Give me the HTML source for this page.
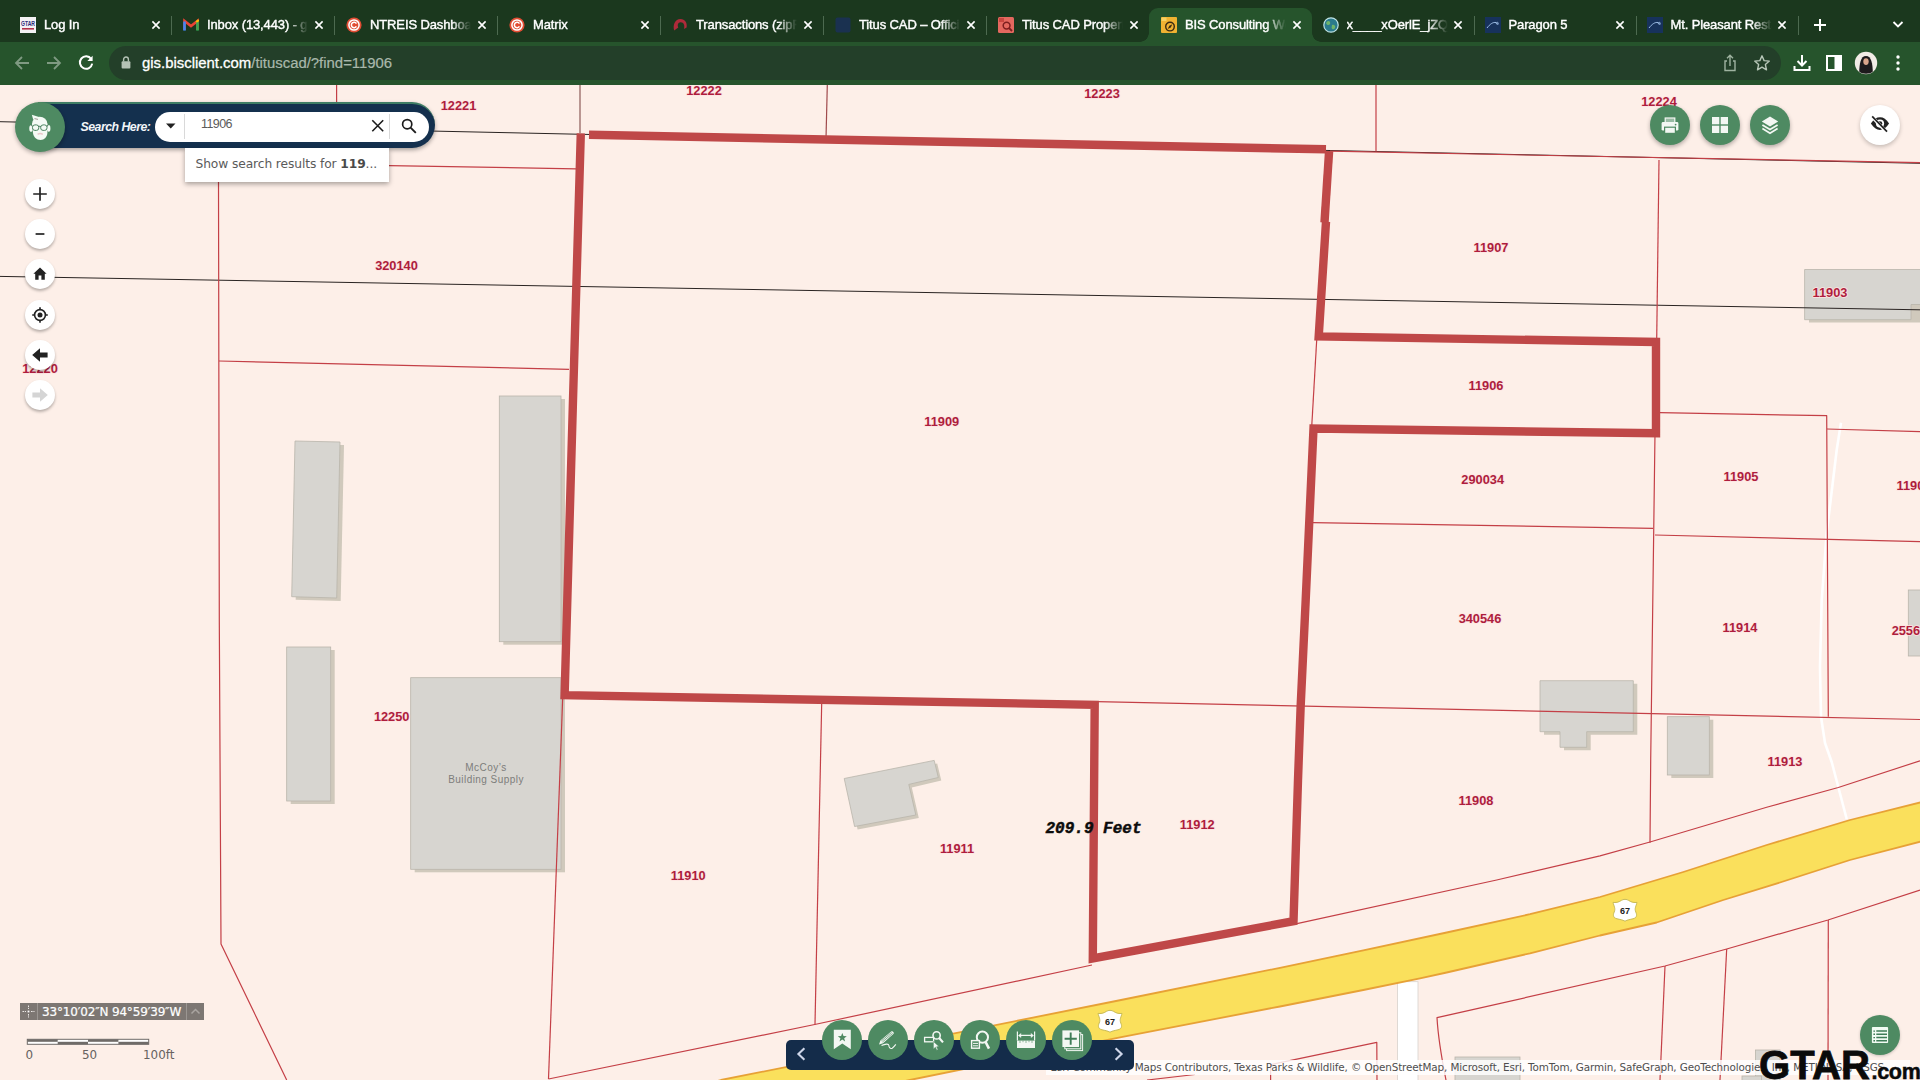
<!DOCTYPE html>
<html lang="en">
<head>
<meta charset="utf-8">
<title>BIS Consulting Web Map</title>
<style>
*{box-sizing:border-box;margin:0;padding:0}
html,body{width:1920px;height:1080px;overflow:hidden;background:#fdefe8;font-family:"Liberation Sans",sans-serif}
#map{position:absolute;left:0;top:0;width:1920px;height:1080px}
#map text.pl{font-family:"Liberation Sans",sans-serif;font-weight:bold;font-size:12.8px;fill:#ae1d3d;text-anchor:middle;paint-order:stroke;stroke:#fde4e1;stroke-width:1.6px;stroke-linejoin:round}
/* ---------- browser chrome ---------- */
#tabbar{position:absolute;left:0;top:0;width:1920px;height:43px;background:#1b381e}
#toolbar{position:absolute;left:0;top:42px;width:1920px;height:43px;background:#26542c}
.tab{position:absolute;top:8px;height:34px;width:163px;color:#fff;font-size:13px;line-height:34px;white-space:nowrap}
.tab .fav{position:absolute;left:12px;top:9px;width:16px;height:16px}
.tab .tt{position:absolute;left:36px;top:0;width:102px;-webkit-text-stroke:.4px #fff;letter-spacing:-.12px;overflow:hidden;-webkit-mask-image:linear-gradient(90deg,#000 80%,transparent 99%);mask-image:linear-gradient(90deg,#000 80%,transparent 99%)}
.tab .cx{position:absolute;left:141.5px;top:11px;width:12px;height:12px}
.tab.sep:after{content:"";position:absolute;right:-1px;top:8px;width:1px;height:19px;background:#4d6a50}
.tab.act{background:#26542c;border-radius:9px 9px 0 0}
.tab.act:before,.tab.act:after{content:"";position:absolute;bottom:0;width:9px;height:9px;background:radial-gradient(circle at 0 0,transparent 8.5px,#26542c 9px)}
.tab.act:before{left:-9px}
.tab.act:after{right:-9px;background:radial-gradient(circle at 100% 0,transparent 8.5px,#26542c 9px)}
#pill{position:absolute;left:109px;top:4px;width:1672px;height:34px;border-radius:17px;background:#233f29}
#url{position:absolute;left:142px;top:11px;font-size:14.9px;line-height:20px;color:#fff;white-space:nowrap;-webkit-text-stroke:.3px #fff}
#url span{color:#a9b8ab;-webkit-text-stroke:.2px #a9b8ab}
.tbi{position:absolute}
/* ---------- map widgets ---------- */
.rbtn{position:absolute;width:30px;height:30px;border-radius:50%;background:#fff;box-shadow:0 2px 3px rgba(0,0,0,.28)}
.rbtn svg{position:absolute;left:0;top:0;width:30px;height:30px}
.gbtn{position:absolute;width:40px;height:40px;border-radius:50%;background:#4e8a62;box-shadow:0 2px 4px rgba(0,0,0,.3)}
.gbtn svg{position:absolute;left:0;top:0;width:40px;height:40px}
.verd{font-family:"DejaVu Sans","Liberation Sans",sans-serif}
</style>
</head>
<body>
<svg id="map" width="1920" height="1080" viewBox="0 0 1920 1080">
<rect x="0" y="0" width="1920" height="1080" fill="#fdefe8"/>
<!-- buildings: shadows then bodies -->
<g fill="#d0c9bc" stroke="none">
 <polygon points="299,444 344,445 340.7,601 295.7,599.7"/>
 <rect x="290.7" y="650" width="44" height="154"/>
 <rect x="503.3" y="399" width="61.7" height="245.7"/>
 <rect x="414.7" y="680.7" width="150.3" height="191.6"/>
 <polygon points="1544,683.7 1637.3,683.7 1637.3,734.7 1590.7,734.7 1590.7,750.3 1564,750.3 1564,734.7 1544,734.7"/>
 <rect x="1671.3" y="719.7" width="42" height="58.3"/>
 <polygon points="1809,272 1924,272 1924,322.5 1809,322.5"/>
 <polygon points="847.2,781.5 937.2,763.4 941.3,780.5 911.8,787.4 918.8,818 857.6,829.5"/>
</g>
<g fill="#d7d5d0" stroke="#b9b5ab" stroke-width="0.8">
 <polygon points="295,441 340,442 336.7,598 291.7,596.7"/>
 <rect x="286.7" y="647" width="44" height="154"/>
 <rect x="499.3" y="396" width="61.7" height="245.7"/>
 <rect x="410.7" y="677.7" width="150.3" height="191.6"/>
 <polygon points="1540,680.7 1633.3,680.7 1633.3,731.7 1586.7,731.7 1586.7,747.3 1560,747.3 1560,731.7 1540,731.7"/>
 <rect x="1667.3" y="716.7" width="42" height="58.3"/>
 <polygon points="1804.6,269.5 1925,269.5 1925,304.5 1911,304.5 1911,319.7 1804.6,319.7"/>
 <rect x="1908.3" y="590" width="20" height="66"/>
 <rect x="1455" y="1057" width="65" height="30"/>
 <rect x="1755.5" y="1050" width="24.5" height="40"/>
 <rect x="1742" y="1076" width="19.5" height="10"/>
 <polygon points="844.2,778.5 934.2,760.4 938.3,777.5 908.8,784.4 915.8,815 854.6,826.5"/>
</g>
<text x="486" y="771" font-family="Liberation Sans, sans-serif" font-size="10" fill="#7d7d7b" text-anchor="middle" letter-spacing="0.45">McCoy’s</text>
<text x="486" y="783" font-family="Liberation Sans, sans-serif" font-size="10" fill="#7d7d7b" text-anchor="middle" letter-spacing="0.45">Building Supply</text>
<!-- white local road -->
<rect x="1397.5" y="981.7" width="20.5" height="110" fill="#ffffff" stroke="#d8d2cc" stroke-width="0.8"/>
<!-- white path -->
<path d="M1841,422.7 L1836.7,450 L1826.7,533 L1821.7,600 L1820,666.7 L1821,716.7 L1825,743 L1831.7,762 L1846.7,819" fill="none" stroke="#ffffff" stroke-width="2.6" stroke-linejoin="round"/>
<!-- highway 67 -->
<path d="M721,1080 L1121,1000 L1280,967.8 L1363.3,950.3 L1446.7,932.5 L1530,914.2 L1600,897 L1683.3,872 L1766.7,845 L1850,820 L1925,801.3 L1925,840.4 L1850,860 L1766.7,886.7 L1723.3,900 L1656.7,922.5 L1600,935.5 L1530,953.3 L1446.7,972.5 L1420,978.3 L1363.3,990 L1280,1006.5 L1120,1037.3 L910,1080 L880,1086 L700,1086 Z" fill="#fae05c" stroke="#e7a136" stroke-width="1.8" stroke-linejoin="round"/>
<!-- black survey lines -->
<g stroke="#2a2422" stroke-width="1" fill="none">
 <line x1="0" y1="121.7" x2="1920" y2="163.3"/>
 <line x1="0" y1="276.4" x2="1920" y2="309.8"/>
</g>
<!-- thin parcel lines -->
<g stroke="#c43f46" stroke-width="1.2" fill="none" stroke-linejoin="round">
 <line x1="336.6" y1="85" x2="336.6" y2="129"/>
 <line x1="580" y1="85" x2="580" y2="133" stroke="#8d5a58"/>
 <line x1="827.3" y1="85" x2="826" y2="139" stroke="#a04a4c"/>
 <line x1="1376" y1="85" x2="1376" y2="151.5"/>
 <line x1="218.5" y1="162.7" x2="576" y2="168.8"/>
 <polyline points="218.4,126 218.5,180 219.3,620 221,944 286.7,1080"/>
 <line x1="219" y1="361" x2="569" y2="369.3"/>
 <line x1="1330" y1="151.2" x2="1920" y2="162.7"/>
 <line x1="1659" y1="160" x2="1656.7" y2="340"/>
 <line x1="1316.7" y1="340" x2="1311.7" y2="427"/>
 <polyline points="1660,412.7 1826.7,415.7 1828.3,716.7"/>
 <line x1="1827" y1="429" x2="1920" y2="431.7"/>
 <line x1="1313" y1="522.7" x2="1653" y2="528.3"/>
 <polyline points="1655,433 1650.7,760 1650,842.7"/>
 <line x1="1655" y1="535" x2="1920" y2="541.7"/>
 <line x1="1097" y1="701.6" x2="1920" y2="719.5"/>
 <line x1="821.7" y1="703" x2="815" y2="1024.5"/>
 <line x1="562.7" y1="698" x2="548.5" y2="1079"/>
 <polyline points="548.5,1079 814.7,1024.5 1092,965"/>
 <path d="M1297,923.6 L1496.7,880 L1600,855.8 L1650,842 L1766.7,807.2 L1838.3,787.5 L1920,760.8"/>
 <path d="M1446,1080 C1441,1055 1438,1035 1437,1017.7 L1665,966 L1726.7,949 L1828,920 L1920,890"/>
 <line x1="1665" y1="966" x2="1660" y2="1080"/>
 <line x1="1726.7" y1="949" x2="1720" y2="1080"/>
 <line x1="1828.3" y1="920" x2="1828" y2="1080"/>
 <polyline points="1377,1080 1376.8,1042.4 1270.6,1064.6 1270.6,1080"/>
 <line x1="1147" y1="1080" x2="1195" y2="1074.5"/>
</g>
<!-- thick selected boundary -->
<g stroke="#bf4848" stroke-width="8.4" fill="none" stroke-linejoin="miter" stroke-linecap="butt">
 <line x1="589" y1="134.8" x2="1326" y2="149.3"/>
 <polyline points="580.8,133.3 573,400 564.6,695.2 1094.7,704.8 1092.8,958.5 1293.5,921.2 1298,780 1300.6,707.5 1305.7,600 1313.5,428.6 1656,433.3 1656,342 1318.7,336.4 1326,221.7"/>
 <polyline points="1324.5,222.5 1329.1,151"/>
</g>
<!-- highway shields -->
<g id="sh">
 <g transform="translate(1110,1021)"><path d="M-12,-7.6 C-9.5,-7.2 -6.5,-7.6 -3.6,-9.6 C-1.8,-11 1.8,-11 3.6,-9.6 C6.5,-7.6 9.5,-7.2 12,-7.6 C11.2,-4 9.2,-1.5 10.8,2 C12.4,5.5 11.5,8 8,8.8 C5,9.5 2.5,9.8 0,11.2 C-2.5,9.8 -5,9.5 -8,8.8 C-11.5,8 -12.4,5.5 -10.8,2 C-9.2,-1.5 -11.2,-4 -12,-7.6 Z" fill="#ffffff" stroke="#c9bb55" stroke-width="1"/><text x="0" y="3.6" font-family="Liberation Sans, sans-serif" font-size="9" font-weight="bold" fill="#222" text-anchor="middle">67</text></g>
 <g transform="translate(1625,910)"><path d="M-12,-7.6 C-9.5,-7.2 -6.5,-7.6 -3.6,-9.6 C-1.8,-11 1.8,-11 3.6,-9.6 C6.5,-7.6 9.5,-7.2 12,-7.6 C11.2,-4 9.2,-1.5 10.8,2 C12.4,5.5 11.5,8 8,8.8 C5,9.5 2.5,9.8 0,11.2 C-2.5,9.8 -5,9.5 -8,8.8 C-11.5,8 -12.4,5.5 -10.8,2 C-9.2,-1.5 -11.2,-4 -12,-7.6 Z" fill="#ffffff" stroke="#c9bb55" stroke-width="1"/><text x="0" y="3.6" font-family="Liberation Sans, sans-serif" font-size="9" font-weight="bold" fill="#222" text-anchor="middle">67</text></g>
</g>
<!-- parcel labels -->
<g>
 <text class="pl" x="458.5" y="109.5">12221</text>
 <text class="pl" x="704" y="94.5">12222</text>
 <text class="pl" x="1102" y="97.5">12223</text>
 <text class="pl" x="1659" y="106">12224</text>
 <text class="pl" x="396.5" y="269.5">320140</text>
 <text class="pl" x="40" y="373">12220</text>
 <text class="pl" x="1491" y="251.5">11907</text>
 <text class="pl" x="1830" y="296.5">11903</text>
 <text class="pl" x="1486" y="389.5">11906</text>
 <text class="pl" x="941.7" y="426">11909</text>
 <text class="pl" x="1482.7" y="483.8">290034</text>
 <text class="pl" x="1741" y="480.5">11905</text>
 <text class="pl" x="1914" y="489.5">11904</text>
 <text class="pl" x="1480" y="622.8">340546</text>
 <text class="pl" x="1740" y="631.8">11914</text>
 <text class="pl" x="1913" y="634.5">255601</text>
 <text class="pl" x="391.7" y="720.5">12250</text>
 <text class="pl" x="1785" y="765.5">11913</text>
 <text class="pl" x="1476" y="804.5">11908</text>
 <text class="pl" x="1197.2" y="828.5">11912</text>
 <text class="pl" x="957" y="852.5">11911</text>
 <text class="pl" x="688.3" y="879.8">11910</text>
 <text x="1093.5" y="832.7" font-family="Liberation Mono, monospace" font-weight="bold" font-style="italic" font-size="16" fill="#0c0c0c" stroke="#0c0c0c" stroke-width=".45" text-anchor="middle">209.9 Feet</text>
</g>
</svg>
<div id="tabbar">
 <div class="tab sep" style="left:8px"><svg class="fav" viewBox="0 0 16 16"><rect width="16" height="16" fill="#f4f2f4"/><text x="8" y="8.5" font-family="Liberation Sans, sans-serif" font-size="6.5" font-weight="bold" fill="#2b2d7c" text-anchor="middle" textLength="14" lengthAdjust="spacingAndGlyphs">GTAR</text><rect x="2" y="11" width="12" height="1.6" fill="#b3324a"/></svg><span class="tt">Log In</span><svg class="cx" viewBox="0 0 12 12"><path d="M2.4,2.4 L9.6,9.600 M9.600,2.400 L2.400,9.600" stroke="#fff" stroke-width="1.600" fill="none"/></svg></div>
 <div class="tab sep" style="left:171px"><svg class="fav" viewBox="0 0 16 16"><path d="M1.5,13 V4 L8,9 L14.5,4 V13" fill="none" stroke="#ea4335" stroke-width="2.6" stroke-linejoin="miter"/><path d="M1.5,13.6 V4.5" stroke="#4285f4" stroke-width="2.6"/><path d="M14.5,13.6 V4.5" stroke="#34a853" stroke-width="2.6"/><path d="M13.2,5 L15.8,3" stroke="#fbbc04" stroke-width="2.2"/></svg><span class="tt">Inbox (13,443) - gmail</span><svg class="cx" viewBox="0 0 12 12"><path d="M2.4,2.4 L9.6,9.600 M9.600,2.400 L2.400,9.600" stroke="#fff" stroke-width="1.600" fill="none"/></svg></div>
 <div class="tab sep" style="left:334px"><svg class="fav" viewBox="0 0 16 16"><circle cx="8" cy="8" r="7.6" fill="#e14c33"/><circle cx="8" cy="8" r="5.1" fill="none" stroke="#fff" stroke-width="1.5"/><path d="M10.4,6.6 A2.7,2.7 0 1 0 10.4,9.4" fill="none" stroke="#fff" stroke-width="1.5"/></svg><span class="tt">NTREIS Dashboard</span><svg class="cx" viewBox="0 0 12 12"><path d="M2.4,2.4 L9.6,9.600 M9.600,2.400 L2.400,9.600" stroke="#fff" stroke-width="1.600" fill="none"/></svg></div>
 <div class="tab sep" style="left:497px"><svg class="fav" viewBox="0 0 16 16"><circle cx="8" cy="8" r="7.6" fill="#e14c33"/><circle cx="8" cy="8" r="5.1" fill="none" stroke="#fff" stroke-width="1.5"/><path d="M10.4,6.6 A2.7,2.7 0 1 0 10.4,9.4" fill="none" stroke="#fff" stroke-width="1.5"/></svg><span class="tt">Matrix</span><svg class="cx" viewBox="0 0 12 12"><path d="M2.4,2.4 L9.6,9.600 M9.600,2.400 L2.400,9.600" stroke="#fff" stroke-width="1.600" fill="none"/></svg></div>
 <div class="tab sep" style="left:660px"><svg class="fav" viewBox="0 0 16 16"><path d="M2.2,13.5 C0.5,8 3,2.2 8.5,2 C13,2 15.5,6 14.6,10.5 L12,12 C13,8 11.5,5.2 8.6,5.3 C6,5.6 5.2,8 6.3,10.6 Z" fill="#ae2a3a"/></svg><span class="tt">Transactions (zipForm)</span><svg class="cx" viewBox="0 0 12 12"><path d="M2.4,2.4 L9.6,9.600 M9.600,2.400 L2.400,9.600" stroke="#fff" stroke-width="1.600" fill="none"/></svg></div>
 <div class="tab sep" style="left:823px"><svg class="fav" viewBox="0 0 16 16"><rect x="0.5" y="0.5" width="15" height="15" rx="2" fill="#1a3150"/></svg><span class="tt">Titus CAD – Official</span><svg class="cx" viewBox="0 0 12 12"><path d="M2.4,2.4 L9.6,9.600 M9.600,2.400 L2.400,9.600" stroke="#fff" stroke-width="1.600" fill="none"/></svg></div>
 <div class="tab" style="left:986px"><svg class="fav" viewBox="0 0 16 16"><rect width="16" height="16" rx="1.5" fill="#e4685f"/><rect x="1" y="1" width="5" height="4" fill="#c8463f"/><circle cx="8.6" cy="8.6" r="3.4" fill="none" stroke="#7d1f1f" stroke-width="1.5"/><path d="M11,11 L14,14" stroke="#7d1f1f" stroke-width="1.8"/></svg><span class="tt">Titus CAD Property</span><svg class="cx" viewBox="0 0 12 12"><path d="M2.4,2.4 L9.6,9.600 M9.600,2.400 L2.400,9.600" stroke="#fff" stroke-width="1.600" fill="none"/></svg></div>
 <div class="tab act" style="left:1149px"><svg class="fav" viewBox="0 0 16 16"><rect width="16" height="16" rx="1" fill="#f0b232"/><rect x="0.5" y="0.5" width="5" height="3.5" fill="#f6cf62"/><circle cx="9" cy="9.6" r="4.3" fill="none" stroke="#3a2a12" stroke-width="1.4"/><path d="M11.3,7.3 L8.3,8.8 L6.7,11.9 L9.8,10.4 Z" fill="#3a2a12"/></svg><span class="tt">BIS Consulting Web</span><svg class="cx" viewBox="0 0 12 12"><path d="M2.4,2.4 L9.6,9.600 M9.600,2.400 L2.400,9.600" stroke="#fff" stroke-width="1.600" fill="none"/></svg></div>
 <div class="tab sep" style="left:1310.5px"><svg class="fav" viewBox="0 0 16 16"><circle cx="8" cy="8" r="7.2" fill="#2b7a8c" stroke="#bfe3e6" stroke-width="1.2"/><path d="M4,4.5 C6,3 8,5 7,7 C6,9 3.5,8 3,6 Z M9,8 C11,7 13,9 12,11 C11,13 8.5,12.5 8.6,10.5 Z" fill="#6fb56a"/></svg><span class="tt">x____xOerlE_jZQj</span><svg class="cx" viewBox="0 0 12 12"><path d="M2.4,2.4 L9.6,9.600 M9.600,2.400 L2.400,9.600" stroke="#fff" stroke-width="1.600" fill="none"/></svg></div>
 <div class="tab sep" style="left:1472.5px"><svg class="fav" viewBox="0 0 16 16"><rect width="16" height="16" fill="#17325c"/><path d="M2,11 C5,7 8,5 11,5.5 L13,7.5" fill="none" stroke="#9fc0e8" stroke-width="1"/><circle cx="12.3" cy="6.3" r="1" fill="none" stroke="#9fc0e8" stroke-width=".8"/></svg><span class="tt">Paragon 5</span><svg class="cx" viewBox="0 0 12 12"><path d="M2.4,2.4 L9.6,9.600 M9.600,2.400 L2.400,9.600" stroke="#fff" stroke-width="1.600" fill="none"/></svg></div>
 <div class="tab sep" style="left:1634.5px"><svg class="fav" viewBox="0 0 16 16"><rect width="16" height="16" fill="#17325c"/><path d="M2,11 C5,7 8,5 11,5.5 L13,7.5" fill="none" stroke="#9fc0e8" stroke-width="1"/><circle cx="12.3" cy="6.3" r="1" fill="none" stroke="#9fc0e8" stroke-width=".8"/></svg><span class="tt">Mt. Pleasant Restaurants</span><svg class="cx" viewBox="0 0 12 12"><path d="M2.4,2.4 L9.6,9.600 M9.600,2.400 L2.400,9.600" stroke="#fff" stroke-width="1.600" fill="none"/></svg></div>
 <svg class="tbi" style="left:1813px;top:18px" width="14" height="14" viewBox="0 0 14 14"><path d="M7,1 V13 M1,7 H13" stroke="#fff" stroke-width="2" fill="none"/></svg>
 <svg class="tbi" style="left:1892px;top:20px" width="12" height="9" viewBox="0 0 12 9"><path d="M1.5,2 L6,6.5 L10.5,2" stroke="#fff" stroke-width="1.8" fill="none"/></svg>
</div>
<div id="toolbar">
 <div id="pill"></div>
 <svg class="tbi" style="left:14px;top:13px" width="16" height="16" viewBox="0 0 16 16"><path d="M15,8 H2 M8,2 L2,8 L8,14" stroke="#7f9a82" stroke-width="1.8" fill="none"/></svg>
 <svg class="tbi" style="left:46px;top:13px" width="16" height="16" viewBox="0 0 16 16"><path d="M1,8 H14 M8,2 L14,8 L8,14" stroke="#7f9a82" stroke-width="1.8" fill="none"/></svg>
 <svg class="tbi" style="left:77px;top:12px" width="18" height="18" viewBox="0 0 18 18"><path d="M14.2,5 A6.2,6.2 0 1 0 15.2,9.6" stroke="#fff" stroke-width="2" fill="none"/><path d="M15.6,1.8 V7 H10.4 Z" fill="#fff"/></svg>
 <svg class="tbi" style="left:121px;top:14px" width="10" height="13" viewBox="0 0 10 13"><rect x="0.6" y="5.2" width="8.8" height="7.2" rx="1" fill="#b4c2b5"/><path d="M2.6,5.4 V3.4 A2.4,2.4 0 0 1 7.4,3.4 V5.4" stroke="#b4c2b5" stroke-width="1.4" fill="none"/></svg>
 <div id="url">gis.bisclient.com<span>/tituscad/?find=11906</span></div>
 <svg class="tbi" style="left:1722px;top:12px" width="16" height="18" viewBox="0 0 16 18"><path d="M5,7 H3 V16.5 H13 V7 H11 M8,12 V1.5 M5,4.3 L8,1.3 L11,4.3" stroke="#9fb3a1" stroke-width="1.4" fill="none"/></svg>
 <svg class="tbi" style="left:1753px;top:12px" width="18" height="18" viewBox="0 0 18 18"><path d="M9,1.8 L11.1,6.6 L16.3,7.1 L12.4,10.6 L13.5,15.8 L9,13.1 L4.5,15.8 L5.6,10.6 L1.7,7.1 L6.9,6.6 Z" stroke="#b7c6b8" stroke-width="1.4" fill="none" stroke-linejoin="round"/></svg>
 <svg class="tbi" style="left:1793px;top:12px" width="18" height="18" viewBox="0 0 18 18"><path d="M9,1 V11 M4.5,7 L9,11.5 L13.5,7 M1.5,12 V16 H16.5 V12" stroke="#fff" stroke-width="2" fill="none"/></svg>
 <svg class="tbi" style="left:1826px;top:13px" width="16" height="16" viewBox="0 0 16 16"><rect x="1" y="1" width="14" height="14" fill="none" stroke="#fff" stroke-width="2"/><rect x="8.5" y="1" width="6.5" height="14" fill="#fff"/></svg>
 <svg class="tbi" style="left:1854px;top:9px" width="24" height="24" viewBox="0 0 24 24"><circle cx="12" cy="12" r="11.2" fill="#f1ece6"/><path d="M5.2,20.5 C5.5,13 6.5,5 12,5 C17.5,5 18.5,13 18.8,20.5 C16,23.5 8,23.5 5.2,20.5 Z" fill="#1d1a1c"/><ellipse cx="12" cy="10.6" rx="2.7" ry="3.4" fill="#d9a48a"/></svg>
 <svg class="tbi" style="left:1895px;top:12px" width="6" height="18" viewBox="0 0 6 18"><circle cx="3" cy="3" r="1.7" fill="#fff"/><circle cx="3" cy="9" r="1.7" fill="#fff"/><circle cx="3" cy="15" r="1.7" fill="#fff"/></svg>
</div>
<!-- search widget -->
<div id="sbar" style="position:absolute;left:38px;top:102px;width:396.5px;height:46px;background:#14304e;border-radius:0 23px 23px 0;border-top:2px solid #3f7d64;box-shadow:0 2px 4px rgba(0,0,0,.35)"></div>
<div style="position:absolute;left:80.5px;top:117px;font-family:'Liberation Sans',sans-serif;font-style:italic;font-weight:bold;font-size:12.3px;line-height:20px;color:#f2f5f8;letter-spacing:-0.5px;white-space:nowrap">Search Here:</div>
<div style="position:absolute;left:155px;top:112px;width:274px;height:30px;border-radius:15px;background:#fff"></div>
<svg style="position:absolute;left:165px;top:122px" width="12" height="8" viewBox="0 0 12 8"><path d="M1,1.5 H10.5 L5.75,6.5 Z" fill="#222"/></svg>
<div style="position:absolute;left:184px;top:114px;width:1px;height:25px;background:#d9d9d9"></div>
<div style="position:absolute;left:389px;top:114px;width:1px;height:25px;background:#d9d9d9"></div>
<div style="position:absolute;left:201px;top:115px;font-size:12.5px;line-height:18px;color:#5b5b5b;letter-spacing:-0.6px">11906</div>
<svg style="position:absolute;left:370px;top:118px" width="16" height="16" viewBox="0 0 16 16"><path d="M2.3,2.3 L13.2,13.2 M13.2,2.3 L2.3,13.2" stroke="#1c1c1c" stroke-width="1.6" fill="none"/></svg>
<svg style="position:absolute;left:400px;top:117px" width="18" height="18" viewBox="0 0 18 18"><circle cx="7.2" cy="7.2" r="4.6" stroke="#1c1c1c" stroke-width="1.7" fill="none"/><path d="M10.6,10.6 L15.8,15.8" stroke="#1c1c1c" stroke-width="1.9"/></svg>
<div style="position:absolute;left:15px;top:102px;width:50px;height:50px;border-radius:50%;background:#4e8a62;box-shadow:0 2px 4px rgba(0,0,0,.3)">
<svg width="50" height="50" viewBox="0 0 50 50"><path d="M16.800,12.800 L24,15 L21.200,18.800 L18.200,17.600 Z" fill="#f4faf5"/><ellipse cx="24.700" cy="22" rx="7.700" ry="7.300" fill="#f4faf5"/><path d="M17,21.500 H32.400 V30.500 C32.400,35 29.200,37.900 25.600,37.900 C21.200,37.900 18.600,35.200 18,31 Z" fill="#f4faf5"/><ellipse cx="16" cy="26.600" rx="1.700" ry="3.300" fill="#f4faf5"/><ellipse cx="33.700" cy="26.400" rx="1.700" ry="3.300" fill="#f4faf5"/><path d="M19.500,16.600 L23,17.400" stroke="#6f5a58" stroke-width="1" opacity=".6"/><rect x="17.500" y="22.900" width="6.300" height="5.500" rx="2.400" fill="#f4faf5" stroke="#4a8460" stroke-width="1"/><rect x="25.700" y="22.900" width="6.300" height="5.500" rx="2.400" fill="#f4faf5" stroke="#4a8460" stroke-width="1"/><path d="M23.800,24.600 Q24.750,23.900 25.700,24.600 M17.500,24 L16.400,23.600 M32,24 L33.200,23.600" stroke="#3f6f52" stroke-width="1" fill="none"/><path d="M22.600,32.400 Q25.200,30.600 27.800,32.400" stroke="#e9c9cb" stroke-width="1.400" fill="none"/></svg>
</div>
<!-- suggestion dropdown -->
<div class="verd" style="position:absolute;left:185px;top:148px;width:204px;height:34px;background:#fff;box-shadow:0 2px 5px rgba(0,0,0,.35);font-size:12.25px;line-height:33px;color:#5a5a5a;padding-left:10.5px;white-space:nowrap;letter-spacing:-0.1px">Show search results for <b style="color:#4a4a4a">119</b>...</div>
<!-- left round buttons -->
<div class="rbtn" style="left:25px;top:178.8px"><svg viewBox="0 0 30 30"><path d="M15,8.2 V21.8 M8.2,15 H21.8" stroke="#222" stroke-width="1.7" fill="none"/></svg></div>
<div class="rbtn" style="left:25px;top:218.7px"><svg viewBox="0 0 30 30"><path d="M10.6,15 H19.4" stroke="#222" stroke-width="1.7" fill="none"/></svg></div>
<div class="rbtn" style="left:25px;top:259.2px"><svg viewBox="0 0 30 30"><path d="M15,8.6 L8.4,14.8 H10.2 V20.8 H13.6 V16.6 H16.4 V20.8 H19.8 V14.8 H21.6 Z" fill="#222"/></svg></div>
<div class="rbtn" style="left:25px;top:299.7px"><svg viewBox="0 0 30 30"><circle cx="15" cy="15" r="5.4" stroke="#222" stroke-width="1.6" fill="none"/><circle cx="15" cy="15" r="2.5" fill="#222"/><path d="M15,7.2 V9.6 M15,20.4 V22.8 M7.2,15 H9.6 M20.4,15 H22.8" stroke="#222" stroke-width="1.6"/></svg></div>
<div class="rbtn" style="left:25px;top:339.7px"><svg viewBox="0 0 30 30"><path d="M7.2,15 L15,8.2 V12.4 H22.6 V17.6 H15 V21.8 Z" fill="#222"/></svg></div>
<div class="rbtn" style="left:25px;top:379.5px"><svg viewBox="0 0 30 30"><path d="M22.8,15 L15,8.2 V12.4 H7.4 V17.6 H15 V21.8 Z" fill="#d5d5d5"/></svg></div>
<!-- top right buttons -->
<div class="gbtn" style="left:1650px;top:105px"><svg viewBox="0 0 40 40"><rect x="14.6" y="12.4" width="10.8" height="5" fill="#f3f7f3"/><rect x="11.6" y="17" width="16.8" height="8.6" rx="1.4" fill="#f3f7f3"/><rect x="14.6" y="22.2" width="10.8" height="6.2" fill="#f3f7f3" stroke="#4e8a62" stroke-width="1.2"/><rect x="15.8" y="13.6" width="8.4" height="3.4" fill="#4e8a62" opacity=".55"/><circle cx="25.6" cy="19.6" r=".9" fill="#4e8a62"/></svg></div>
<div class="gbtn" style="left:1700px;top:105px"><svg viewBox="0 0 40 40"><rect x="12" y="12" width="7.3" height="7.3" fill="#f3f7f3"/><rect x="20.7" y="12" width="7.3" height="7.3" fill="#f3f7f3"/><rect x="12" y="20.7" width="7.3" height="7.3" fill="#f3f7f3"/><rect x="20.7" y="20.7" width="7.3" height="7.3" fill="#f3f7f3"/></svg></div>
<div class="gbtn" style="left:1750px;top:105px"><svg viewBox="0 0 40 40"><path d="M20,11.6 L28.2,16.6 L20,21.6 L11.8,16.6 Z" fill="#f3f7f3"/><path d="M12.4,20 L20,24.6 L27.6,20" stroke="#f3f7f3" stroke-width="1.7" fill="none"/><path d="M12.4,23.6 L20,28.2 L27.6,23.6" stroke="#f3f7f3" stroke-width="1.7" fill="none"/></svg></div>
<div class="gbtn" style="left:1860px;top:105px;background:#fff;box-shadow:0 2px 4px rgba(0,0,0,.22)"><svg viewBox="0 0 40 40"><path d="M10.900,18.600 C13.600,14.200 16.600,12.300 20,12.300 C23.400,12.300 26.400,14.200 29.100,18.600 C26.400,23 23.400,24.900 20,24.900 C16.600,24.900 13.600,23 10.900,18.600 Z" fill="#222"/><circle cx="20" cy="18.600" r="4.100" fill="#fff"/><circle cx="20" cy="18.600" r="2.300" fill="#222"/><path d="M11.300,10.800 L26.400,27.200" stroke="#fff" stroke-width="3.200"/><path d="M12.200,11.400 L27,26.600" stroke="#222" stroke-width="1.700"/></svg></div>
<!-- bottom right list button -->
<div class="gbtn" style="left:1860px;top:1015px;box-shadow:0 1px 3px rgba(0,0,0,.2)"><svg viewBox="0 0 40 40"><rect x="11.900" y="12.100" width="16.200" height="16" rx=".8" fill="#f1fbf3"/><path d="M16.300,16.100 H27 M16.300,19.300 H27 M16.300,22.600 H27 M16.300,25.800 H27" stroke="#3f7d58" stroke-width="1.500"/><path d="M13.400,16.100 H15 M13.400,19.300 H15 M13.400,22.600 H15 M13.400,25.800 H15" stroke="#3f7d58" stroke-width="1.400"/></svg></div>
<!-- coordinate widget -->
<div style="position:absolute;left:20px;top:1003.200px;width:184px;height:16.600px;background:#7d7773"></div>
<div style="position:absolute;left:36.500px;top:1003.200px;width:1px;height:16.600px;background:#9b9692"></div>
<div style="position:absolute;left:186px;top:1003.200px;width:1px;height:16.600px;background:#9b9692"></div>
<svg style="position:absolute;left:22px;top:1005px" width="13" height="13" viewBox="0 0 13 13"><path d="M6.500,.5 V4 M6.500,9 V12.500 M.5,6.500 H4 M9,6.500 H12.500" stroke="#ece9e6" stroke-width="1" stroke-dasharray="1.600 .8"/><rect x="5.600" y="5.600" width="1.800" height="1.800" fill="#fff"/></svg>
<div class="verd" style="position:absolute;left:42px;top:1003.200px;height:16.600px;font-size:12px;line-height:18.800px;color:#fff;white-space:nowrap;letter-spacing:-.17px;-webkit-text-stroke:.2px #fff">33°10′02″N 94°59′39″W</div>
<svg style="position:absolute;left:190px;top:1007px" width="11" height="9" viewBox="0 0 11 9"><path d="M1.500,6.500 L5.500,2.500 L9.500,6.500" stroke="#aaa5a1" stroke-width="1.500" fill="none"/></svg>
<!-- scale bar -->
<svg style="position:absolute;left:26px;top:1038px" width="126" height="8" viewBox="0 0 126 8"><rect x="1.300" y="1.300" width="121.400" height="5" fill="#fff" stroke="#6f6b68" stroke-width="1"/><rect x="1.300" y="1.300" width="30.400" height="2.500" fill="#6f6b68"/><rect x="31.700" y="3.800" width="30.300" height="2.500" fill="#6f6b68"/><rect x="62" y="1.300" width="30.400" height="2.500" fill="#6f6b68"/><rect x="92.400" y="3.800" width="30.300" height="2.500" fill="#6f6b68"/></svg>
<div class="verd" style="position:absolute;left:25.500px;top:1048px;font-size:11.900px;line-height:15px;color:#66625f">0</div>
<div class="verd" style="position:absolute;left:82px;top:1048px;font-size:11.900px;line-height:15px;color:#66625f">50</div>
<div class="verd" style="position:absolute;left:143px;top:1048px;font-size:11.900px;line-height:15px;color:#66625f;white-space:nowrap">100ft</div>
<!-- attribution -->
<div class="verd" style="position:absolute;left:1046px;top:1060.300px;width:864px;height:15px;background:rgba(255,255,255,.82);font-size:10.400px;line-height:15px;color:#4e4e4e;white-space:nowrap;overflow:hidden;padding-left:4.600px;letter-spacing:-.12px">Esri Community Maps Contributors, Texas Parks &amp; Wildlife, © OpenStreetMap, Microsoft, Esri, TomTom, Garmin, SafeGraph, GeoTechnologies, Inc, METI/NASA, USGS</div>
<!-- bottom tool dock -->
<div style="position:absolute;left:786.200px;top:1040.200px;width:348px;height:29.400px;border-radius:5px;background:#142c4a"></div>
<svg style="position:absolute;left:794px;top:1046px" width="14" height="16" viewBox="0 0 14 16"><path d="M10.4,2.2 L4.4,8 L10.4,13.8" stroke="#cfd7ea" stroke-width="2.1" fill="none"/></svg>
<svg style="position:absolute;left:1112px;top:1046px" width="14" height="16" viewBox="0 0 14 16"><path d="M3.6,2.2 L9.6,8 L3.6,13.8" stroke="#cfd7ea" stroke-width="2.1" fill="none"/></svg>
<div class="gbtn" style="left:821.700px;top:1020px;box-shadow:none"><svg viewBox="0 0 40 40"><path d="M11.800,9.800 H28.800 V29.200 L20.300,23.400 L11.800,29.200 Z" fill="#f3f7f3"/><path d="M20.300,13 L21.500,16.100 L24.800,16.200 L22.200,18.200 L23.100,21.400 L20.300,19.600 L17.500,21.400 L18.400,18.200 L15.800,16.200 L19.100,16.100 Z" fill="#4e8a62"/></svg></div>
<div class="gbtn" style="left:867.700px;top:1020px;box-shadow:none"><svg viewBox="0 0 40 40"><path d="M11,24.500 L12.400,20.400 L23.200,11.400 C24.400,10.400 26.600,12.400 25.600,13.800 L15,23.200 Z" fill="#f3f7f3"/><path d="M13.400,20.800 L23.600,12.400 M14.400,22 L24.600,13.400" stroke="#4e8a62" stroke-width=".7"/><path d="M13.500,25.600 C17,24 20.600,23.400 20.800,25.200 C21,27.400 22.200,29.200 24.200,28.200 C25.600,27.400 26.600,26 27.800,24.400" stroke="#f3f7f3" stroke-width="1.100" fill="none"/></svg></div>
<div class="gbtn" style="left:913.700px;top:1020px;box-shadow:none"><svg viewBox="0 0 40 40"><rect x="10.600" y="17.400" width="9" height="4.400" fill="none" stroke="#f3f7f3" stroke-width="1.300"/><circle cx="22.600" cy="15.400" r="3.600" fill="none" stroke="#f3f7f3" stroke-width="1.600"/><path d="M25.200,18 L29,22.400" stroke="#f3f7f3" stroke-width="2.200"/><path d="M19.400,21.400 L19.400,29 L21.400,27.200 L22.800,30.200 L24,29.600 L22.600,26.800 L25,26.600 Z" fill="#f3f7f3" stroke="#4e8a62" stroke-width=".5"/></svg></div>
<div class="gbtn" style="left:959.700px;top:1020px;box-shadow:none"><svg viewBox="0 0 40 40"><circle cx="22.400" cy="17.200" r="5.600" fill="none" stroke="#f3f7f3" stroke-width="2"/><path d="M25.600,22 L29,28.600" stroke="#f3f7f3" stroke-width="2.600"/><rect x="11.600" y="20.600" width="7.800" height="7.600" fill="#4e8a62" stroke="#f3f7f3" stroke-width="1.400"/><path d="M13,23.400 H18 M13,25.800 H18" stroke="#f3f7f3" stroke-width="1"/></svg></div>
<div class="gbtn" style="left:1005.700px;top:1020px;box-shadow:none"><svg viewBox="0 0 40 40"><rect x="11" y="20.600" width="18" height="7.400" fill="#f3f7f3"/><path d="M11.400,11.400 V20.600 M28.600,11.400 V20.600" stroke="#f3f7f3" stroke-width="1.200"/><path d="M13,15.400 H27 M15.200,13.600 L13,15.400 L15.200,17.200 M24.800,13.600 L27,15.400 L24.800,17.200" stroke="#f3f7f3" stroke-width="1.100" fill="none"/><path d="M14,20.600 V23 M17,20.600 V22.200 M20,20.600 V23 M23,20.600 V22.200 M26,20.600 V23" stroke="#4e8a62" stroke-width=".6"/></svg></div>
<div class="gbtn" style="left:1051.700px;top:1020px;box-shadow:none"><svg viewBox="0 0 40 40"><rect x="14.600" y="14.600" width="16" height="16" fill="none" stroke="#f3f7f3" stroke-width="1"/><rect x="12.800" y="12.800" width="16" height="16" fill="#4e8a62" stroke="#f3f7f3" stroke-width="1"/><rect x="10.400" y="10.400" width="16.600" height="16.600" fill="#f3f7f3"/><path d="M18.700,12.600 V24.800 M12.600,18.700 H24.800" stroke="#3f7d58" stroke-width="1.900"/></svg></div>
<!-- GTAR.com watermark -->
<div style="position:absolute;left:1759px;top:1042px;width:161px;height:38px;white-space:nowrap;overflow:hidden;font-family:'Liberation Sans',sans-serif;font-weight:bold;color:#0a0a0a"><span style="position:absolute;left:0;top:0px;font-size:40px;line-height:46px;letter-spacing:.2px;-webkit-text-stroke:.8px #0a0a0a">GTAR</span><span style="position:absolute;left:112.500px;top:17.500px;font-size:21.500px;line-height:24px;letter-spacing:-.3px;-webkit-text-stroke:.5px #0a0a0a">.com</span></div>
</body>
</html>
